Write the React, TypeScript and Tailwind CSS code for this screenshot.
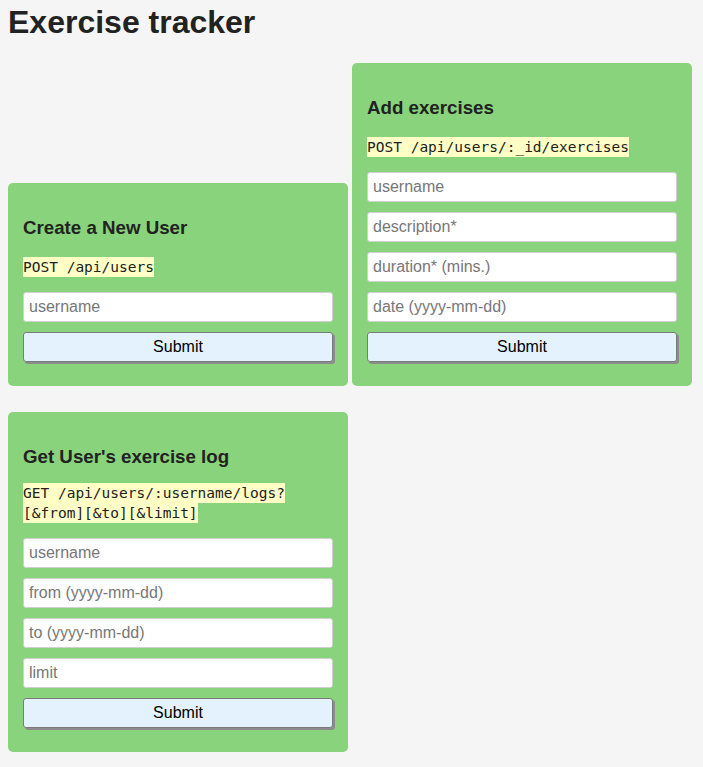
import React from "react";

type CardProps = {
  title: string;
  code: string[];
  fields: string[];
  codeGap?: string;
};

const Card: React.FC<CardProps> = ({ title, code, fields, codeGap = "mt-[19px]" }) => {
  return (
    <div className="w-[340px] rounded-[5px] bg-[#88d37b] px-[15px] pt-[15px] pb-[24px]">
      <h3 className="mt-[18.72px] text-[18.72px] leading-[21.5px] font-bold text-[#222]">{title}</h3>
      <div className={`${codeGap} flex flex-col items-start`}>
        {code.map((line) => (
          <span
            key={line}
            className="bg-[#ffffc6] text-[14.5px] leading-[20px] text-[#222] font-['DejaVu_Sans_Mono',monospace]"
          >
            {line}
          </span>
        ))}
      </div>
      <form className="mt-[15px] flex flex-col" onSubmit={(e) => e.preventDefault()}>
        {fields.map((f) => (
          <input
            key={f}
            type="text"
            placeholder={f}
            className="mb-[10px] h-[30px] w-full rounded-[3px] border border-[#d0d0d0] bg-white px-[5px] text-[16px] text-[#222] placeholder:text-[#777] outline-none"
          />
        ))}
        <button
          type="submit"
          className="h-[30px] w-full rounded-[3px] border border-[#7a7a7a] bg-[#e3f2fd] text-[16px] text-black shadow-[2px_2px_0_#8c8c8c]"
        >
          Submit
        </button>
      </form>
    </div>
  );
};

export default function App() {
  return (
    <div className="min-h-screen bg-[#f5f5f5] px-[8px] pb-[8px] font-['Liberation_Sans',Arial,sans-serif] text-[#222]">
      <h1 className="pt-[4px] text-[32px] leading-[37px] font-bold text-[#222]">Exercise tracker</h1>

      <div className="mt-[22px] flex items-end gap-x-[4px]">
        <Card title="Create a New User" code={["POST /api/users"]} fields={["username"]} />
        <Card
          title="Add exercises"
          code={["POST /api/users/:_id/exercises"]}
          fields={["username", "description*", "duration* (mins.)", "date (yyyy-mm-dd)"]}
        />
      </div>

      <div className="mt-[26px] flex">
        <Card
          title="Get User's exercise log"
          code={["GET /api/users/:username/logs?", "[&from][&to][&limit]"]}
          fields={["username", "from (yyyy-mm-dd)", "to (yyyy-mm-dd)", "limit"]}
          codeGap="mt-[16px]"
        />
      </div>
    </div>
  );
}
